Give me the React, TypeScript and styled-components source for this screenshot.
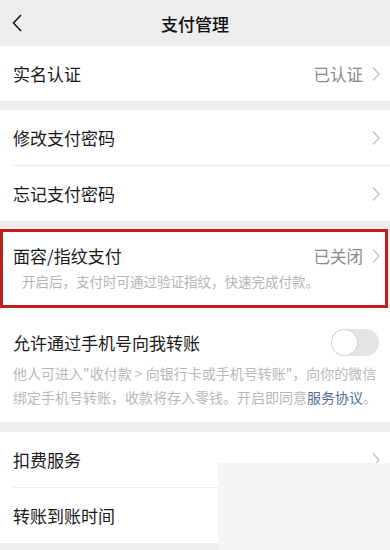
import React from "react";
import styled, { createGlobalStyle } from "styled-components";

const GlobalStyle = createGlobalStyle`
  body {
    margin: 0;
    background: #ededed;
    font-family: "Noto Sans CJK SC", "Noto Sans", sans-serif;
    color: #1a1a1a;
  }
`;

interface ICell {
  label: string;
  value?: string;
}

const securityCells: ICell[] = [
  { label: "修改支付密码" },
  { label: "忘记支付密码" },
];

const serviceCells: ICell[] = [
  { label: "扣费服务" },
  { label: "转账到账时间" },
];

function Chevron() {
  return (
    <ChevronIcon viewBox="0 0 8 16" width="8" height="16">
      <path d="M1 1.5 L7 8 L1 14.5" fill="none" stroke="#c4c4c4" strokeWidth="1.4" />
    </ChevronIcon>
  );
}

function App() {
  return (
    <>
      <GlobalStyle />
      <Page>
        <Header>
          <BackBtn>
            <svg viewBox="0 0 10 18" width="10" height="18">
              <path d="M9 1 L1.5 9 L9 17" fill="none" stroke="#1a1a1a" strokeWidth="1.6" />
            </svg>
          </BackBtn>
          <Title>支付管理</Title>
          <span />
        </Header>

        <Group>
          <Cell>
            <Label>实名认证</Label>
            <Value>已认证</Value>
            <Chevron />
          </Cell>
        </Group>

        <Group>
          {securityCells.map((cell) => (
            <Cell key={cell.label}>
              <Label>{cell.label}</Label>
              <Chevron />
            </Cell>
          ))}
        </Group>

        <Highlight>
          <BlockHead>
            <Label>面容/指纹支付</Label>
            <Value>已关闭</Value>
            <Chevron />
          </BlockHead>
          <Desc>开启后，支付时可通过验证指纹，快速完成付款。</Desc>
        </Highlight>

        <SwitchBlock>
          <SwitchHead>
            <Label>允许通过手机号向我转账</Label>
            <Toggle>
              <Knob />
            </Toggle>
          </SwitchHead>
          <LongDesc>
            他人可进入"收付款 &gt; 向银行卡或手机号转账"，向你的微信绑定手机号转账，收款将存入零钱。开启即同意
            <Link>服务协议</Link>。
          </LongDesc>
        </SwitchBlock>

        <Group>
          {serviceCells.map((cell) => (
            <Cell key={cell.label}>
              <Label>{cell.label}</Label>
              <Chevron />
            </Cell>
          ))}
        </Group>

        <Watermark />
      </Page>
    </>
  );
}

const Page = styled.div`
  position: relative;
  width: 390px;
  height: 550px;
  overflow: hidden;
  background: #ededed;
`;

const Header = styled.div`
  height: 46px;
  display: grid;
  grid-template-columns: 48px 1fr 48px;
  align-items: center;
  background: #ededed;
`;

const BackBtn = styled.div`
  display: flex;
  padding-left: 12px;
  padding-bottom: 1px;
`;

const Title = styled.h1`
  margin: 0;
  text-align: center;
  font-size: 17px;
  font-weight: 500;
  color: #111;
`;

const Group = styled.div`
  background: #fff;
  & + & {
    margin-top: 9px;
  }
  margin-bottom: 9px;
`;

const Cell = styled.div`
  height: 55px;
  display: flex;
  align-items: center;
  padding: 0 10px 0 13px;
  position: relative;
  & + &::before {
    content: "";
    position: absolute;
    top: -1px;
    left: 13px;
    right: 0;
    height: 1px;
    background: #ededed;
  }
  & + & {
    margin-top: 1px;
  }
`;

const Label = styled.span`
  flex: 1;
  font-size: 17px;
  color: #1a1a1a;
`;

const Value = styled.span`
  font-size: 16.5px;
  color: #8a8a8a;
  margin-right: 9px;
`;

const ChevronIcon = styled.svg`
  flex: none;
`;

const Highlight = styled.div`
  margin: -1px 2px 0 0;
  height: 79px;
  box-sizing: border-box;
  border: 3px solid #c0211b;
  background: #fff;
  padding: 0 5px 0 10px;
`;

const BlockHead = styled.div`
  display: flex;
  align-items: center;
  height: 43px;
  padding-top: 2px;
`;

const Desc = styled.div`
  font-size: 13.5px;
  color: #b4b4b4;
  padding-left: 9px;
  margin-top: -6px;
`;

const SwitchBlock = styled.div`
  background: #fff;
  padding: 16px 7px 13px 13px;
  margin-bottom: 10px;
`;

const SwitchHead = styled.div`
  display: flex;
  align-items: center;
  height: 36px;
  padding-right: 3px;
`;

const Toggle = styled.div`
  width: 48px;
  height: 27px;
  border-radius: 14px;
  background: #e4e4e4;
  position: relative;
  margin-right: 1px;
`;

const Knob = styled.div`
  position: absolute;
  left: 1px;
  top: 1px;
  width: 25px;
  height: 25px;
  border-radius: 50%;
  background: #fff;
  box-shadow: 0 0 0 1px #d6d6d6;
`;

const LongDesc = styled.p`
  margin: 1px 0 0;
  font-size: 14px;
  line-height: 24px;
  color: #b8b8b8;
  white-space: normal;
`;

const Link = styled.span`
  color: #576b95;
`;

const Watermark = styled.div`
  position: absolute;
  left: 218px;
  top: 463px;
  right: 0;
  bottom: 0;
  background: #f5f5f5;
`;

export default App;
